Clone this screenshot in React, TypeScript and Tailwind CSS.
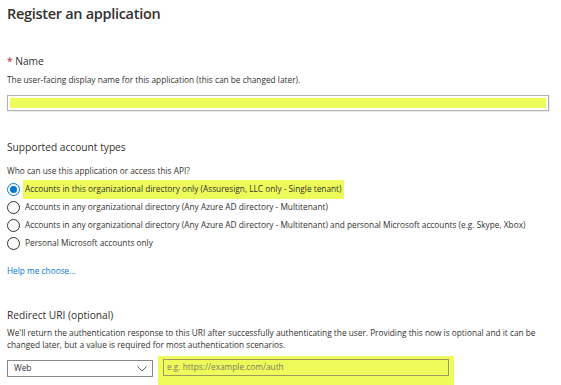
import React from 'react'

const options = [
 'Accounts in this organizational directory only (Assuresign, LLC only - Single tenant)',
 'Accounts in any organizational directory (Any Azure AD directory - Multitenant)',
 'Accounts in any organizational directory (Any Azure AD directory - Multitenant) and personal Microsoft accounts (e.g. Skype, Xbox)',
 'Personal Microsoft accounts only',
]

const Radio: React.FC<{ checked?: boolean }> = ({ checked }) => (
 <span
  className={
   checked
    ? 'flex h-[13px] w-[13px] shrink-0 items-center justify-center rounded-full border border-[#0078d4] bg-white'
    : 'flex h-[13px] w-[13px] shrink-0 items-center justify-center rounded-full border border-[#323130] bg-white'
  }
 >
  {checked && <span className="h-[7px] w-[7px] rounded-full bg-[#0078d4]" />}
 </span>
)

export default function App() {
 return (
  <div className="h-[385px] w-[561px] overflow-hidden bg-white pl-[7px] text-[#323130] [font-family:'Open_Sans',sans-serif]">
   <h1 className="text-[14.5px] font-semibold leading-[28px] tracking-[-0.3px]">Register an application</h1>

   <div className="mt-[25px] text-[10.2px] leading-[16px]">
    <span className="text-[#a4262c]">* </span>Name
   </div>
   <p className="mt-[5px] text-[8.3px] leading-[12px]">
    The user-facing display name for this application (this can be changed later).
   </p>
   <div className="mt-[9px] mr-[12px] h-[16px] border border-[#b3b0ad] p-[2px] shadow-[1px_1px_1px_rgba(0,0,0,0.08)]">
    <div className="h-full bg-[#edfc5b]" />
   </div>

   <div className="mt-[28px] text-[10.2px] leading-[16px]">Supported account types</div>
   <p className="mt-[10px] text-[8.3px] leading-[12px]">Who can use this application or access this API?</p>
   <div className="mt-[3px] flex flex-col">
    {options.map((o, i) => (
     <label key={o} className="flex h-[18px] items-center">
      <Radio checked={i === 0} />
      <span
       className={
        i === 0
         ? 'ml-[3px] flex h-[19px] items-center bg-[#edfc5b] px-[2px] text-[8.3px]'
         : 'ml-[5px] text-[8.3px]'
       }
      >
       {o}
      </span>
     </label>
    ))}
   </div>
   <a className="mt-[13px] block text-[8.3px] leading-[12px] text-[#0078d4]">Help me choose...</a>

   <div className="mt-[30px] text-[10.2px] leading-[16px]">Redirect URI (optional)</div>
   <p className="mt-[4px] pr-[8px] text-[8.3px] leading-[12px]">
    We'll return the authentication response to this URI after successfully authenticating the user. Providing this now is optional and it can be changed later, but a value is required for most authentication scenarios.
   </p>
   <div className="mt-[5px] flex items-start">
    <div className="mt-[4px] flex h-[17px] w-[146px] items-center justify-between border border-[#8a8886] pl-[6px] pr-[5px] text-[8.3px]">
     <span>Web</span>
     <svg width="10" height="6" viewBox="0 0 10 6" fill="none" stroke="#605e5c" strokeWidth="1">
      <path d="M0.5 0.5 L5 5 L9.5 0.5" />
     </svg>
    </div>
    <div className="ml-[5px] h-[32px] w-[296px] bg-[#edfc5b] px-[5px] pt-[3px]">
     <div className="flex h-[17px] items-center border border-[#9c9a5c] pl-[3px] text-[8.3px] text-[#7a7863]">
      e.g. https://example.com/auth
     </div>
    </div>
   </div>
  </div>
 )
}
